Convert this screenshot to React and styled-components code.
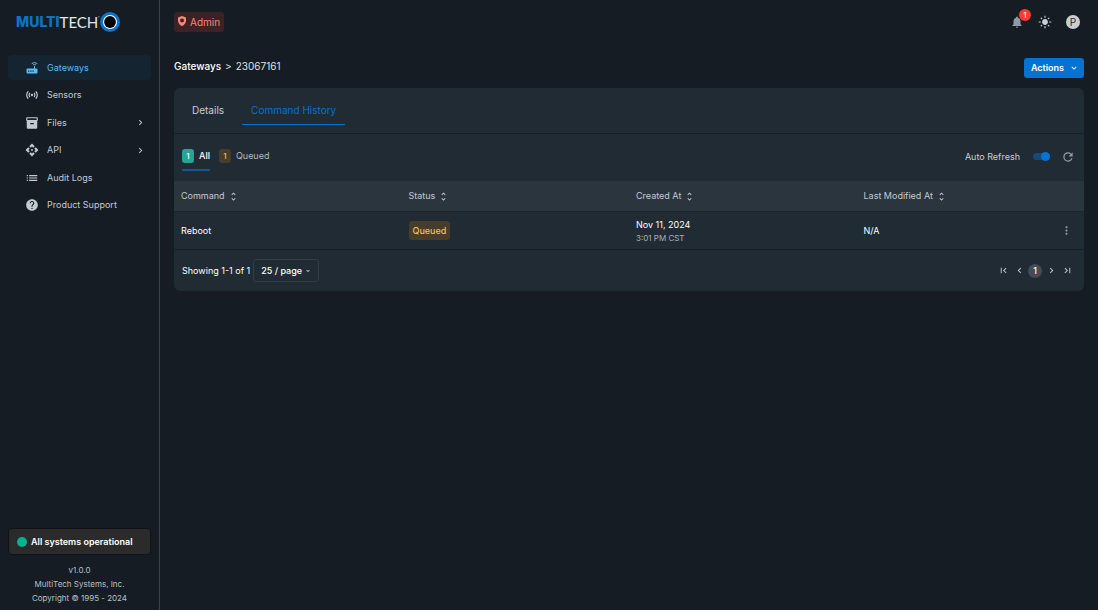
import React from 'react'
import styled, { createGlobalStyle } from 'styled-components'
import {
  MdSensors, MdInventory2, MdApi, MdList, MdHelp, MdChevronRight, MdChevronLeft,
  MdNotifications, MdLightMode, MdRefresh, MdMoreVert, MdFirstPage, MdLastPage,
  MdUnfoldMore, MdKeyboardArrowDown, MdArrowDropDown
} from 'react-icons/md'

const GlobalStyle = createGlobalStyle`
    *{
        box-sizing:border-box;
    }
    body{
        margin:0;
        background:#161c23;
        color:#fff;
        font-family:Inter, "Liberation Sans", sans-serif;
        font-size:9px;
        line-height:14px;
    }
    button, select, input{
        font:inherit;
        color:inherit;
        margin:0;
    }
    button{
        background:none;
        border:0;
        padding:0;
        cursor:pointer;
    }
    a{
        color:inherit;
        text-decoration:none;
    }
    svg{
        display:block;
        flex:none;
    }
`
const Container = styled.div`
    display:flex;
    min-height:100vh;
`
const Sidebar = styled.aside`
    width:160px;
    flex:none;
    display:flex;
    flex-direction:column;
    padding:11px 8px 5px;
    border-right:1px solid #3a424a;
`
const Logo = styled.a`
    display:flex;
    align-items:center;
    height:22px;
    margin:0 8px 21px;
    font-family:Lato, sans-serif;
    font-size:15px;
    line-height:22px;
    color:#e4e7ea;
`
const LogoBold = styled.span`
    font-family:Inter, sans-serif;
    font-size:14px;
    font-weight:800;
    color:#0a74c9;
`
const LogoMark = styled.sup`
    align-self:flex-start;
    font-size:6px;
    line-height:14px;
`
const Nav = styled.nav`
    display:grid;
    grid-template-rows:repeat(6, 1fr);
    height:165px;
`
const NavItem = styled.a`
    display:flex;
    align-items:center;
    height:25px;
    align-self:center;
    padding:0 5px 0 17px;
    border-radius:4px;
    color:${props => props.$active ? "#5bbcf0" : "#c4cad1"};
    background:${props => props.$active ? "#142431" : "transparent"};
`
const NavLabel = styled.span`
    flex:1;
    margin-left:8px;
`
const Status = styled.a`
    display:flex;
    align-items:center;
    gap:4px;
    height:27px;
    margin-top:auto;
    padding:0 8px;
    border:1px solid #0f1318;
    border-radius:4px;
    background:#2b2b2b;
    font-weight:600;
`
const Dot = styled.span`
    width:10px;
    height:10px;
    border-radius:50%;
    background:#00b38f;
`
const Footer = styled.footer`
    margin-top:8px;
    text-align:center;
    color:#b9c0c7;
    font-size:8px;
`
const Main = styled.main`
    flex:1;
    min-width:0;
    padding:11px 14px;
`
const Row = styled.div`
    display:flex;
    align-items:center;
    justify-content:space-between;
`
const TopBar = styled(Row)`
    height:22px;
    margin-bottom:24px;
`
const Role = styled.div`
    display:flex;
    align-items:center;
    gap:4px;
    height:20px;
    padding:0 4px;
    border-radius:3px;
    background:#3c2125;
    color:#f58a77;
    font-size:10px;
`
const TopActions = styled.div`
    display:flex;
    align-items:center;
    gap:14px;
    margin-right:4px;
    color:#c8ced4;
`
const IconButton = styled.button`
    position:relative;
    display:flex;
    align-items:center;
    justify-content:center;
    min-width:14px;
    color:${props => props.$muted ? "#919ba6" : "#c8ced4"};
`
const Badge = styled.span`
    position:absolute;
    top:-6px;
    right:-7px;
    width:12px;
    height:12px;
    border-radius:50%;
    background:#ff3b30;
    color:#fff;
    font-size:8px;
    line-height:12px;
`
const Avatar = styled.button`
    width:14px;
    height:14px;
    border-radius:50%;
    background:#c8ced4;
    color:#20272e;
    font-size:10px;
    line-height:14px;
`
const TitleBar = styled(Row)`
    height:22px;
    margin-bottom:9px;
`
const Breadcrumbs = styled.nav`
    display:flex;
    gap:4px;
    margin-bottom:5px;
    font-size:10px;
    color:#dfe3e6;
`
const Current = styled.a`
    color:#fff;
    font-weight:500;
`
const ActionsButton = styled.button`
    display:flex;
    align-items:center;
    gap:5px;
    height:20px;
    padding:0 5px 0 7px;
    border-radius:3px;
    background:#0672d2;
    font-weight:600;
`
const Card = styled.section`
    border-radius:6px;
    background:#212b34;
    overflow:hidden;
`
const Tabs = styled.div`
    display:flex;
    align-items:flex-start;
    gap:9px;
    height:46px;
    padding:8px 9px 0;
    border-bottom:1px solid #171e25;
`
const Tab = styled.button`
    height:29px;
    padding:0 9px;
    border-bottom:1px solid ${props => props.$active ? "#0672d2" : "transparent"};
    color:${props => props.$active ? "#0672d2" : "#c8ced4"};
    font-size:10px;
`
const Toolbar = styled(Row)`
    height:47px;
    padding:0 9px 2px 8px;
`
const Filters = styled.div`
    display:flex;
    gap:9px;
`
const Filter = styled.button`
    display:flex;
    align-items:center;
    gap:5px;
    height:28px;
    border-bottom:2px solid ${props => props.$active ? "#0f599b" : "transparent"};
    color:${props => props.$active ? "#fff" : "#b3bac1"};
    font-weight:${props => props.$active ? 500 : 400};
`
const Count = styled.span`
    width:12px;
    height:14px;
    border-radius:3px;
    background:${props => props.$green ? "#25a596" : "#463d2c"};
    color:${props => props.$green ? "#fff" : "#f5c04f"};
    font-size:8px;
    font-weight:500;
`
const Refresh = styled.div`
    display:flex;
    align-items:center;
    gap:11px;
`
const SwitchLabel = styled.label`
    display:flex;
    align-items:center;
    gap:13px;
    color:#c8ced4;
`
const Switch = styled.input`
    appearance:none;
    display:flex;
    align-items:center;
    justify-content:flex-end;
    width:17px;
    height:7px;
    border-radius:4px;
    background:#13497b;
    cursor:pointer;
    &::before{
        content:"";
        width:9px;
        height:9px;
        flex:none;
        border-radius:50%;
        background:#0672d2;
    }
    &:not(:checked){
        justify-content:flex-start;
    }
`
const Table = styled.table`
    width:100%;
    table-layout:fixed;
    border-collapse:separate;
    border-spacing:0;
    text-align:left;
`
const Th = styled.th`
    height:30px;
    padding:0 7px;
    background:#2b353e;
    color:#c4cad1;
    font-weight:400;
`
const SortButton = styled.button`
    display:flex;
    align-items:center;
    gap:3px;
`
const Td = styled.td`
    height:39px;
    padding:0 7px;
    border-top:1px solid #1b242c;
    border-bottom:1px solid #171e25;
`
const Muted = styled.div`
    color:#a9b1b9;
    font-size:8px;
    line-height:12px;
`
const Chip = styled.span`
    display:inline-block;
    height:19px;
    padding:0 4px;
    border-radius:3px;
    background:#463d2c;
    color:#f5c04f;
    line-height:19px;
    font-weight:500;
`
const MoreCell = styled(Row)`
    padding-right:4px;
`
const Pagination = styled(Row)`
    height:41px;
    padding:0 10px 0 8px;
`
const PageSize = styled.label`
    display:flex;
    align-items:center;
    gap:3px;
`
const SelectBox = styled.span`
    display:grid;
    align-items:center;
    height:23px;
    border:1px solid #333d46;
    border-radius:3px;
    svg{
        grid-area:1 / 1;
        justify-self:end;
        margin-right:5px;
        color:#a9b1b9;
        pointer-events:none;
    }
`
const Select = styled.select`
    grid-area:1 / 1;
    appearance:none;
    width:64px;
    padding:0 7px;
    border:0;
    background:transparent;
    font-weight:500;
`
const Pages = styled.div`
    display:flex;
    align-items:center;
    gap:2px;
`
const Page = styled.button`
    width:14px;
    height:14px;
    border-radius:50%;
    background:#444d56;
    font-weight:500;
`

const LogoRing = () => (
  <svg width="20" height="20" viewBox="0 0 20 20">
    <circle cx="10" cy="10" r="10" fill="#0a74c9" />
    <circle cx="10" cy="10" r="7" fill="#fff" />
    <circle cx="10" cy="10" r="5.9" fill="#000" />
  </svg>
)

const GatewayIcon = () => (
  <svg width="14" height="14" viewBox="0 0 28 28" fill="currentColor">
    <path fillRule="evenodd" d="M5 15h13v-5h2v5h3a2 2 0 0 1 2 2v6a2 2 0 0 1-2 2H5a2 2 0 0 1-2-2v-6a2 2 0 0 1 2-2m1 4v2.500h2.500V19zm4.500 0v2.500H13V19zm4.500 0v2.500h2.500V19z" />
    <path d="M16 8q3-2.500 6 0M13.500 5.200q5.500-4.500 11 0" fill="none" stroke="currentColor" strokeWidth="2" />
  </svg>
)

const ShieldIcon = () => (
  <svg width="8" height="13" viewBox="0 0 16 26">
    <path fill="currentColor" fillRule="evenodd" d="M8 0l8 3v6c0 5-3.400 9.300-8 11-4.600-1.700-8-6-8-11V3zM8 5a4 4 0 1 0 0 8 4 4 0 0 0 0-8z" />
  </svg>
)

const navItems = [
  { label: "Gateways", icon: <GatewayIcon />, active: true },
  { label: "Sensors", icon: <MdSensors size={14} /> },
  { label: "Files", icon: <MdInventory2 size={14} />, nested: true },
  { label: "API", icon: <MdApi size={14} />, nested: true },
  { label: "Audit Logs", icon: <MdList size={14} /> },
  { label: "Product Support", icon: <MdHelp size={14} /> },
]

const columns = ["Command", "Status", "Created At", "Last Modified At"]

const App = () => {
  return (
    <>
      <GlobalStyle />
      <Container>
        <Sidebar>
          <Logo href="#">
            <LogoBold>MULTI</LogoBold>TECH<LogoMark>'</LogoMark>
            <LogoRing />
          </Logo>
          <Nav>
            {navItems.map(item => (
              <NavItem href="#" key={item.label} $active={item.active}>
                {item.icon}
                <NavLabel>{item.label}</NavLabel>
                {item.nested && <MdChevronRight size={11} />}
              </NavItem>
            ))}
          </Nav>
          <Status href="#"><Dot />All systems operational</Status>
          <Footer>
            <div>v1.0.0</div>
            <div>MultiTech Systems, Inc.</div>
            <div>Copyright © 1995 - 2024</div>
          </Footer>
        </Sidebar>
        <Main>
          <TopBar>
            <Role><ShieldIcon />Admin</Role>
            <TopActions>
              <IconButton $muted aria-label="Notifications">
                <MdNotifications size={14} />
                <Badge>1</Badge>
              </IconButton>
              <IconButton aria-label="Theme"><MdLightMode size={14} /></IconButton>
              <Avatar>P</Avatar>
            </TopActions>
          </TopBar>
          <TitleBar>
            <Breadcrumbs>
              <Current href="#">Gateways</Current>
              <span>&gt;</span>
              <span>23067161</span>
            </Breadcrumbs>
            <ActionsButton>Actions<MdKeyboardArrowDown size={10} /></ActionsButton>
          </TitleBar>
          <Card>
            <Tabs>
              <Tab>Details</Tab>
              <Tab $active>Command History</Tab>
            </Tabs>
            <Toolbar>
              <Filters>
                <Filter $active><Count $green>1</Count>All</Filter>
                <Filter><Count>1</Count>Queued</Filter>
              </Filters>
              <Refresh>
                <SwitchLabel>
                  Auto Refresh
                  <Switch type="checkbox" defaultChecked />
                </SwitchLabel>
                <IconButton $muted aria-label="Refresh"><MdRefresh size={14} /></IconButton>
              </Refresh>
            </Toolbar>
            <Table>
              <thead>
                <tr>
                  {columns.map(column => (
                    <Th key={column}>
                      <SortButton>{column}<MdUnfoldMore size={11} /></SortButton>
                    </Th>
                  ))}
                </tr>
              </thead>
              <tbody>
                <tr>
                  <Td>Reboot</Td>
                  <Td><Chip>Queued</Chip></Td>
                  <Td>
                    Nov 11, 2024
                    <Muted>3:01 PM CST</Muted>
                  </Td>
                  <Td>
                    <MoreCell>
                      N/A
                      <IconButton $muted aria-label="More"><MdMoreVert size={13} /></IconButton>
                    </MoreCell>
                  </Td>
                </tr>
              </tbody>
            </Table>
            <Pagination>
              <PageSize>
                Showing 1-1 of 1
                <SelectBox>
                  <Select defaultValue="25">
                    <option value="25">25 / page</option>
                    <option value="50">50 / page</option>
                  </Select>
                  <MdArrowDropDown size={10} />
                </SelectBox>
              </PageSize>
              <Pages>
                <IconButton aria-label="First page"><MdFirstPage size={11} /></IconButton>
                <IconButton aria-label="Previous page"><MdChevronLeft size={11} /></IconButton>
                <Page>1</Page>
                <IconButton aria-label="Next page"><MdChevronRight size={11} /></IconButton>
                <IconButton aria-label="Last page"><MdLastPage size={11} /></IconButton>
              </Pages>
            </Pagination>
          </Card>
        </Main>
      </Container>
    </>
  )
}

export default App
